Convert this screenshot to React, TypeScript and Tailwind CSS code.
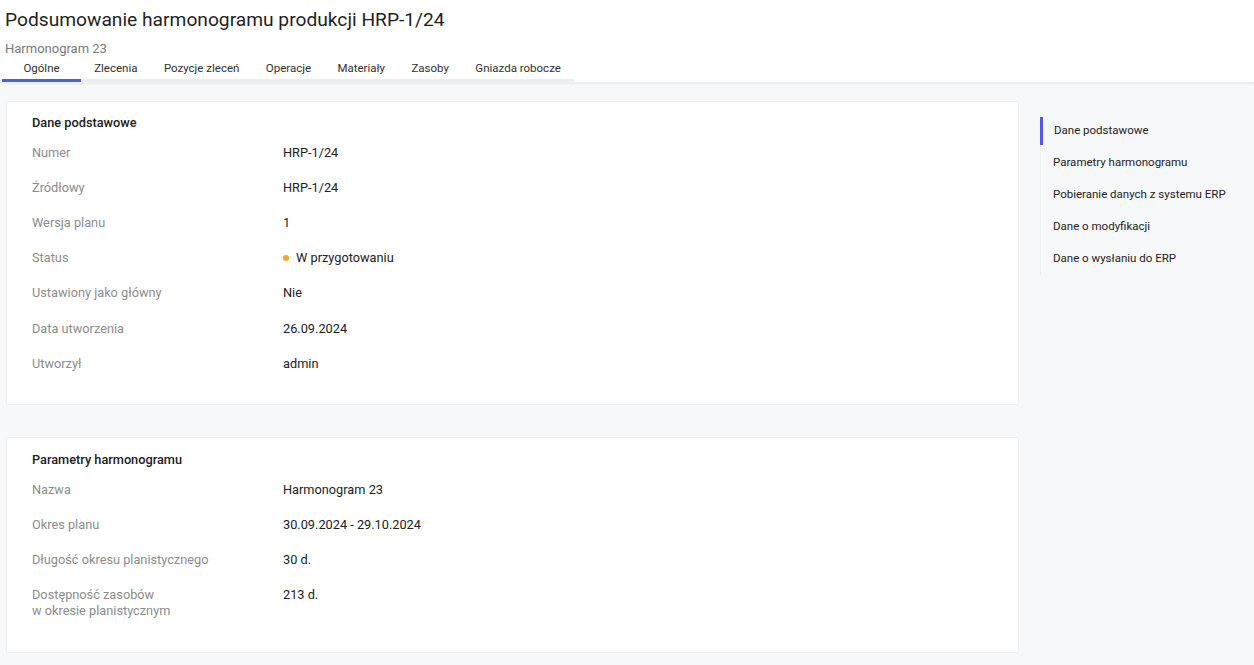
import React from "react"

const tabs = ["Ogólne", "Zlecenia", "Pozycje zleceń", "Operacje", "Materiały", "Zasoby", "Gniazda robocze"]

const basic: { label: string; value: React.ReactNode }[] = [
    { label: "Numer", value: "HRP-1/24" },
    { label: "Źródłowy", value: "HRP-1/24" },
    { label: "Wersja planu", value: "1" },
    {
        label: "Status",
        value: (
            <span className="flex items-center">
                <span className="w-[6px] h-[6px] rounded-full bg-[#f5a623] mr-[7px]" />
                W przygotowaniu
            </span>
        ),
    },
    { label: "Ustawiony jako główny", value: "Nie" },
    { label: "Data utworzenia", value: "26.09.2024" },
    { label: "Utworzył", value: "admin" },
]

const params: { label: React.ReactNode; value: string }[] = [
    { label: "Nazwa", value: "Harmonogram 23" },
    { label: "Okres planu", value: "30.09.2024 - 29.10.2024" },
    { label: "Długość okresu planistycznego", value: "30 d." },
    {
        label: (
            <>
                Dostępność zasobów
                <br />
                w okresie planistycznym
            </>
        ),
        value: "213 d.",
    },
]

const navItems = [
    "Dane podstawowe",
    "Parametry harmonogramu",
    "Pobieranie danych z systemu ERP",
    "Dane o modyfikacji",
    "Dane o wysłaniu do ERP",
]

function Section({ title, rows, className }: { title: string; rows: { label: React.ReactNode; value: React.ReactNode }[]; className?: string }) {
    return (
        <div className={`bg-white border border-[#eff0f2] rounded-[2px] px-[25px] ${className ?? ""}`}>
            <div className="text-[12.75px] leading-[16px] font-medium text-[#212121]">{title}</div>
            <div className="mt-[4.5px]">
                {rows.map((r, i) => (
                    <div key={i} className="flex items-start py-[9.55px] text-[12.75px] leading-[16px]">
                        <div className="w-[251px] shrink-0 text-[#8c8c8c]">{r.label}</div>
                        <div className="text-[#212121]">{r.value}</div>
                    </div>
                ))}
            </div>
        </div>
    )
}

export default function App() {
    return (
        <div className="min-h-[665px] bg-[#f7f8fa] flex flex-col" style={{ fontFamily: "Roboto, 'Noto Sans', sans-serif" }}>
            <div className="bg-white px-[5px] pt-[8px] shadow-[0_1px_2px_rgba(0,0,0,0.06)] border-b border-[#eceef1]">
                <h1 className="text-[19.2px] leading-[24px] text-[#1f1f1f]">Podsumowanie harmonogramu produkcji HRP-1/24</h1>
                <div className="mt-[9px] text-[13px] leading-[16px] text-[#7a7a7a]">Harmonogram 23</div>
                <div className="flex w-fit -ml-[3px] mt-[3px] border-b-[3px] border-[#eeeeee]">
                    {tabs.map((t, i) =>
                        i === 0 ? (
                            <div key={t} className="w-[79px] text-center text-[11.5px] leading-[16px] pb-[3px] text-[#303030] border-b-[3px] border-[#4f5be8] -mb-[3px]">
                                {t}
                            </div>
                        ) : (
                            <div key={t} className="px-[13.2px] text-[11.5px] leading-[16px] pb-[3px] text-[#303030]">
                                {t}
                            </div>
                        )
                    )}
                </div>
            </div>

            <div className="flex pl-[6px] pt-[18px] pb-[13px]">
                <div className="w-[1013px] shrink-0">
                    <Section title="Dane podstawowe" rows={basic} className="pt-[13px] pb-[23px]" />
                    <Section title="Parametry harmonogramu" rows={params} className="mt-[32px] pt-[14px] pb-[23px]" />
                </div>

                <div className="ml-[21px] mt-[14px] self-start flex flex-col border-l border-[#eceef1] w-[200px]">
                    {navItems.map((n, i) => (
                        <div
                            key={n}
                            className={`h-[28px] my-[2px] flex items-center text-[11.5px] text-[#222] ${i === 0 ? "border-l-[3px] border-[#4f5be8] -ml-px pl-[11px]" : "pl-[12px]"}`}
                        >
                            {n}
                        </div>
                    ))}
                </div>
            </div>
        </div>
    )
}
